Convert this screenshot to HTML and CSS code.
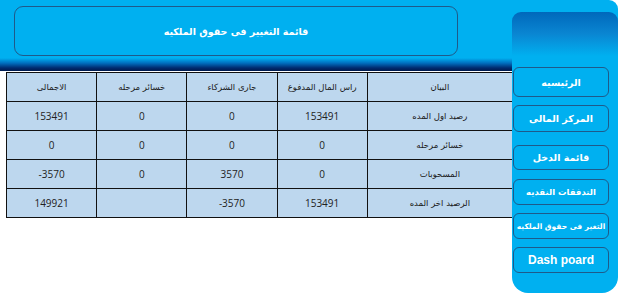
FILE: index.html
```html
<!DOCTYPE html>
<html lang="ar">
<head>
<meta charset="utf-8">
<title>قائمة التغيير فى حقوق الملكيه</title>
<link rel="stylesheet" href="styles.css">
</head>
<body>
<div class="page">
  <header class="banner">
    <div class="title-box">قائمة التغيير فى حقوق الملكيه</div>
  </header>
  <main class="content">
    <table class="sheet" dir="rtl">
      <colgroup>
        <col class="c-label"><col class="c-num"><col class="c-num"><col class="c-num"><col class="c-num">
      </colgroup>
      <tr><th>البيان</th><th>راس المال المدفوع</th><th>جارى الشركاء</th><th>خسائر مرحله</th><th>الاجمالى</th></tr>
      <tr><td>رصيد اول المده</td><td class="n">153491</td><td class="n">0</td><td class="n">0</td><td class="n">153491</td></tr>
      <tr><td>خسائر مرحله</td><td class="n">0</td><td class="n">0</td><td class="n">0</td><td class="n">0</td></tr>
      <tr><td>المسحوبات</td><td class="n">0</td><td class="n">3570</td><td class="n">0</td><td class="n">-3570</td></tr>
      <tr><td>الرصيد اخر المده</td><td class="n">153491</td><td class="n">-3570</td><td class="n"></td><td class="n">149921</td></tr>
    </table>
  </main>
  <nav class="side">
    <a class="btn b1">الرئيسيه</a>
    <a class="btn b2">المركز المالى</a>
    <a class="btn b3">قائمة الدخل</a>
    <a class="btn b4">التدفقات النقديه</a>
    <a class="btn b5">التغير فى حقوق الملكيه</a>
    <a class="btn b6 en">Dash poard</a>
  </nav>
</div>
</body>
</html>
```
FILE: styles.css
```css
html, body {
  margin: 0;
  padding: 0;
  background: #ffffff;
}
.page {
  position: relative;
  width: 621px;
  height: 295px;
  overflow: hidden;
  font-family: "DejaVu Sans", "Liberation Sans", sans-serif;
}
.banner {
  height: 71px;
  width: 618px;
  box-sizing: border-box;
  padding: 6px 0 0 14px;
  border-top-right-radius: 9px;
  background: linear-gradient(to bottom, #00b0f0 0, #00b0f0 58px, #0070c0 63px, #002a6e 68px, #001a4d 71px);
}
.title-box {
  width: 444px;
  height: 50px;
  box-sizing: border-box;
  border: 1px solid #1f5a8a;
  border-radius: 9px;
  display: flex;
  align-items: center;
  justify-content: center;
  color: #ffffff;
  font-weight: bold;
  font-size: 9.5px;
  direction: rtl;
}
.content {
  padding: 1px 0 0 6px;
}
.sheet {
  border-collapse: collapse;
  width: 507px;
  background: #bdd7ee;
  color: #1a1a1a;
  table-layout: fixed;
}
.c-label { width: 145px; }
.c-num { width: 90px; }
.sheet th, .sheet td {
  border: 1px solid #111;
  height: 28px;
  padding: 0;
  text-align: center;
  font-weight: normal;
  font-size: 8.5px;
}
.sheet td.n {
  direction: ltr;
  font-family: "Open Sans", "Liberation Sans", sans-serif;
  font-size: 10px;
  color: #222;
}
.side {
  position: absolute;
  left: 512px;
  top: 12px;
  width: 106px;
  height: 281px;
  box-sizing: border-box;
  padding: 55px 0 0 1px;
  border-radius: 9px 9px 16px 16px;
  background: linear-gradient(to bottom, #0068bb 0, #0a86d2 22px, #00b0f0 44px, #00b0f0 100%);
  display: flex;
  flex-direction: column;
}
.btn {
  width: 96px;
  box-sizing: border-box;
  border: 1px solid #1f5a8a;
  border-radius: 6px;
  background: #00b0f0;
  color: #ffffff;
  font-weight: bold;
  font-size: 9.5px;
  display: flex;
  align-items: center;
  justify-content: center;
  white-space: nowrap;
  direction: rtl;
}
.b1 { height: 30px; }
.b2 { height: 27px; margin-top: 8px; }
.b3 { height: 25px; margin-top: 13px; }
.b4 { height: 26px; margin-top: 9px; font-size: 8.5px; }
.b5 { height: 26px; margin-top: 8px; font-size: 7.5px; letter-spacing: -0.3px; }
.b6 { height: 26px; margin-top: 8px; }
.en {
  direction: ltr;
  font-family: "Liberation Sans", sans-serif;
  font-size: 12px;
}
```
